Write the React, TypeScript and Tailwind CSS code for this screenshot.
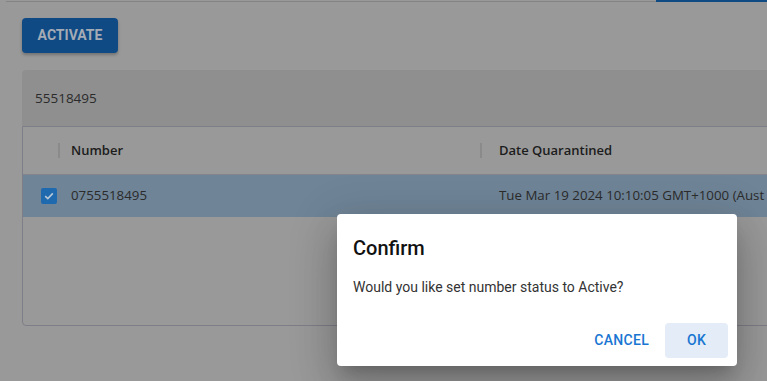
import React from "react";

export default function App() {
  return (
    <div className="relative w-[767px] h-[381px] overflow-hidden bg-[#999999]" style={{ fontFamily: "'Open Sans', 'Liberation Sans', sans-serif" }}>
      <div className="flex h-[2px]">
        <div className="w-[6px]" />
        <div className="w-[650px] h-[1px] mt-[1px] bg-[#848484]" />
        <div className="flex-1 bg-[#0f4a85]" />
      </div>
      <div className="pl-[22px] pt-[16px]">
        <button className="h-[35px] w-[96px] rounded-[4px] bg-[#0f4a85] text-[#a4abb5] text-[14px] font-bold tracking-[0px] shadow-[0_2px_3px_rgba(0,0,0,0.25)]" style={{ fontFamily: "Roboto, sans-serif" }}>
          ACTIVATE
        </button>
      </div>
      <div className="ml-[22px] mt-[17px] w-[800px]">
        <div className="h-[56px] bg-[#8f8f8f] rounded-t-[4px] flex items-center pl-[13px] text-[13.5px] text-[#2b2b2b]">55518495</div>
        <div className="h-[200px] border border-[#7e7e88] rounded-b-[4px]">
          <div className="h-[48px] flex items-center border-b border-[#84848c] text-[13px] font-semibold text-[#1c1c1c]">
            <div className="w-[35px] shrink-0" />
            <div className="w-[2px] h-[15px] bg-[#8a8a8a] shrink-0" />
            <div className="w-[420px] pl-[11px] shrink-0">Number</div>
            <div className="w-[2px] h-[15px] bg-[#8a8a8a] shrink-0" />
            <div className="pl-[17px] whitespace-nowrap">Date Quarantined</div>
          </div>
          <div className="h-[42px] flex items-center bg-[#6f8497] text-[13.3px] text-[#2b2b2b]">
            <div className="w-[48px] shrink-0 flex justify-end pr-[14px]">
              <div className="w-[16px] h-[16px] rounded-[2px] bg-[#1f6aae] flex items-center justify-center">
                <svg width="12" height="12" viewBox="0 0 12 12"><path d="M2.2 6.2 L4.8 8.6 L9.8 3.4" fill="none" stroke="#b9c8d8" strokeWidth="1.6" /></svg>
              </div>
            </div>
            <div className="w-[428px] shrink-0">0755518495</div>
            <div className="whitespace-nowrap">Tue Mar 19 2024 10:10:05 GMT+1000 (Aust</div>
          </div>
        </div>
      </div>
      <div className="absolute left-[337px] top-[214px] w-[400px] h-[152px] bg-white rounded-[4px] shadow-[0_11px_15px_-7px_rgba(0,0,0,0.2),0_24px_38px_3px_rgba(0,0,0,0.14),0_9px_46px_8px_rgba(0,0,0,0.12)] flex flex-col" style={{ fontFamily: "Roboto, sans-serif" }}>
        <div className="px-[16px] pt-[18px] text-[20px] font-medium leading-[32px] text-[#111]">Confirm</div>
        <div className="px-[16px] pt-[13px] text-[14px] text-[#333] leading-[20px]">Would you like set number status to Active?</div>
        <div className="mt-auto mb-[8px] flex justify-end items-center gap-[8px] pr-[9px]">
          <button className="h-[35px] px-[8px] text-[14px] font-medium text-[#1976d2] tracking-[0.3px]">CANCEL</button>
          <button className="h-[35px] w-[63px] rounded-[4px] bg-[#e3ecf7] text-[14px] font-medium text-[#1976d2] tracking-[0.3px]">OK</button>
        </div>
      </div>
    </div>
  );
}
